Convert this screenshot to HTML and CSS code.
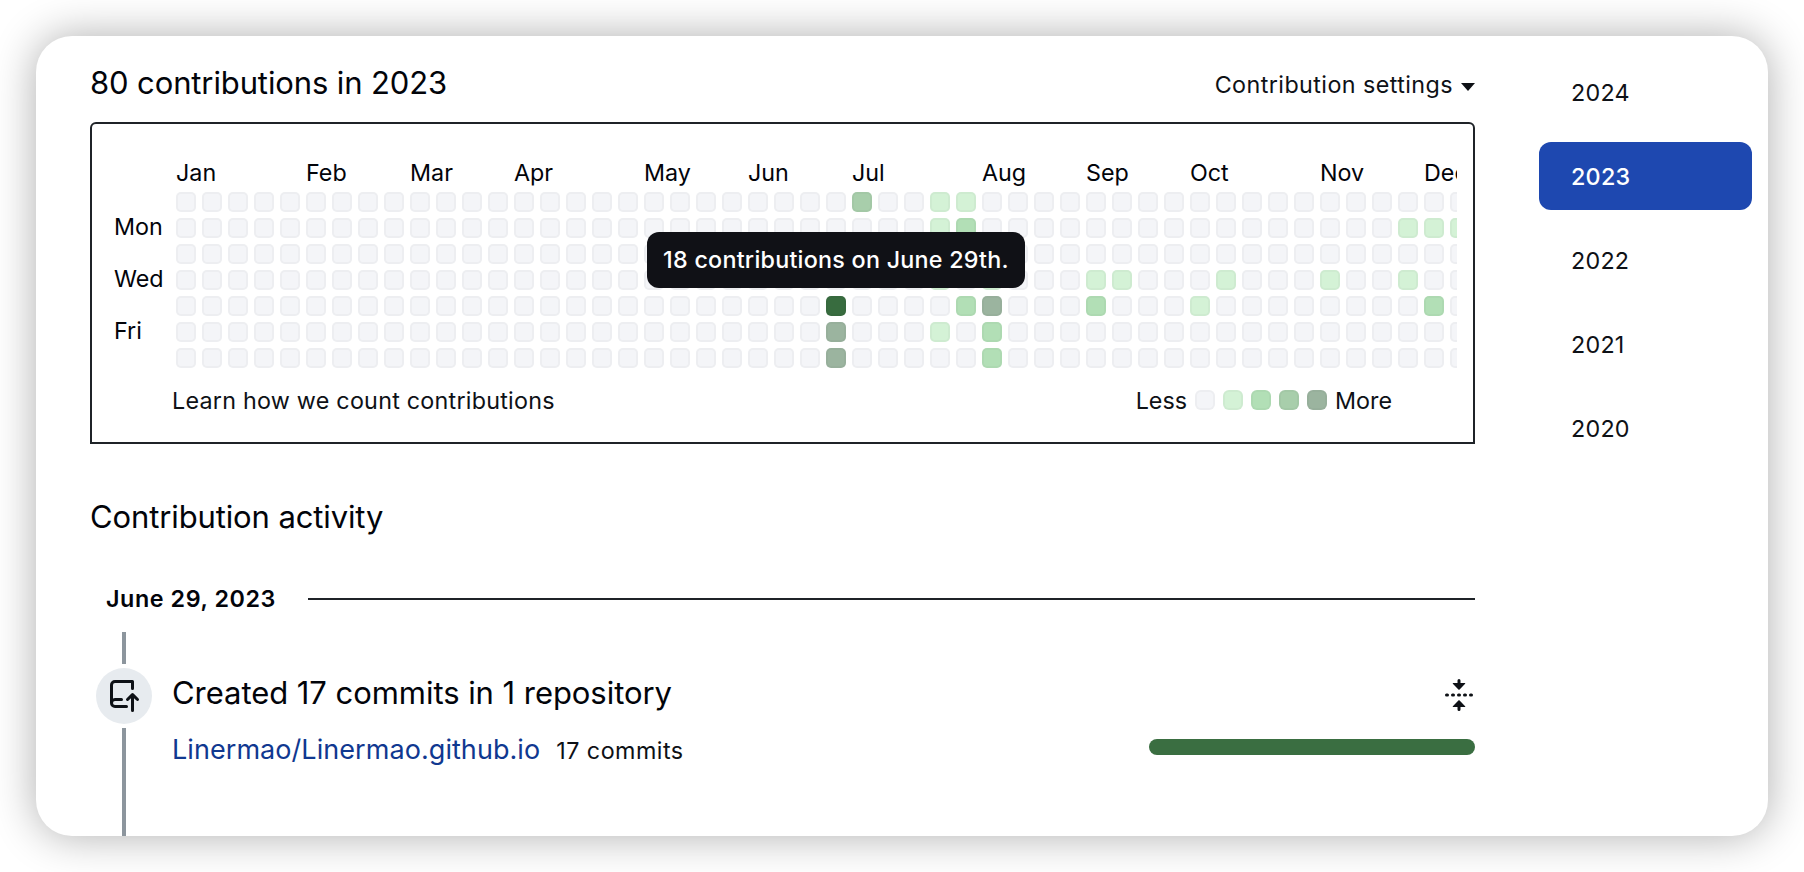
FILE: index.html
```html
<!DOCTYPE html>
<html lang="en">
<head>
<meta charset="utf-8">
<title>Contributions</title>
<link rel="stylesheet" href="styles.css">
</head>
<body>
<div class="card">
  <main class="main">
    <header class="top">
      <h2 class="heading title">80 contributions in 2023</h2>
      <div class="settings"><span>Contribution settings</span><i class="caret"></i></div>
    </header>
    <section class="graph">
      <div class="calendar">
        <div class="days"><span>Mon</span><span>Wed</span><span>Fri</span></div>
        <div class="weeks">
          <div class="months" id="months"></div>
          <div class="cells" id="cells"></div>
        </div>
      </div>
      <div class="footer">
        <span class="learn">Learn how we count contributions</span>
        <div class="legend">
          <span>Less</span>
          <i class="cell l0"></i><i class="cell l1"></i><i class="cell l2"></i><i class="cell l3"></i><i class="cell l4"></i>
          <span>More</span>
        </div>
      </div>
      <div class="tooltip">18 contributions on June 29th.</div>
    </section>
    <h2 class="heading activity">Contribution activity</h2>
    <div class="date"><span>June 29, 2023</span><hr></div>
    <section class="timeline">
      <div class="rail">
        <i class="line upper"></i>
        <div class="badge"><svg width="32" height="32" viewBox="0 0 16 16"><path d="M1 2.5A2.5 2.5 0 0 1 3.5 0h8.75a.75.75 0 0 1 .75.75v3.5a.75.75 0 0 1-1.5 0V1.5h-8a1 1 0 0 0-1 1v6.708A2.493 2.493 0 0 1 3.5 9h3.25a.75.75 0 0 1 0 1.5H3.5a1 1 0 0 0 0 2h5.75a.75.75 0 0 1 0 1.5H3.5A2.5 2.5 0 0 1 1 11.5Zm13.23 7.79h-.001l-1.224-1.224v6.184a.75.75 0 0 1-1.5 0V9.066L10.28 10.29a.75.75 0 0 1-1.06-1.061l2.505-2.504a.75.75 0 0 1 1.06 0L15.29 9.23a.751.751 0 0 1-.018 1.042.751.751 0 0 1-1.042.018Z"/></svg></div>
        <i class="line lower"></i>
      </div>
      <div class="event">
        <div class="summary">
          <h3 class="created">Created 17 commits in 1 repository</h3>
          <svg class="fold" width="32" height="32" viewBox="0 0 16 16"><path d="M10.896 2H8.75V.75a.75.75 0 0 0-1.5 0V2H5.104a.25.25 0 0 0-.177.427l2.896 2.896a.25.25 0 0 0 .354 0l2.896-2.896A.25.25 0 0 0 10.896 2ZM8.75 15.25a.75.75 0 0 1-1.5 0V14H5.104a.25.25 0 0 1-.177-.427l2.896-2.896a.25.25 0 0 1 .354 0l2.896 2.896a.25.25 0 0 1-.177.427H8.75v1.25Zm-6.5-6.5a.75.75 0 0 0 0-1.5h-.5a.75.75 0 0 0 0 1.5h.5ZM6 8a.75.75 0 0 1-.75.75h-.5a.75.75 0 0 1 0-1.5h.5A.75.75 0 0 1 6 8Zm2.25.75a.75.75 0 0 0 0-1.5h-.5a.75.75 0 0 0 0 1.5h.5ZM12 8a.75.75 0 0 1-.75.75h-.5a.75.75 0 0 1 0-1.5h.5A.75.75 0 0 1 12 8Zm2.25.75a.75.75 0 0 0 0-1.5h-.5a.75.75 0 0 0 0 1.5h.5Z"/></svg>
        </div>
        <div class="repo">
          <a class="link">Linermao/Linermao.github.io</a>
          <span class="count">17 commits</span>
          <i class="bar"></i>
        </div>
      </div>
    </section>
  </main>
  <nav class="years">
    <a>2024</a><a class="selected">2023</a><a>2022</a><a>2021</a><a>2020</a>
  </nav>
</div>
<script src="calendar.js"></script>
</body>
</html>
```
FILE: styles.css
```css
* { box-sizing: border-box; }
body {
  margin: 0;
  height: 872px;
  padding: 36px;
  overflow: hidden;
  background: #fff;
  color: #02040a;
  font: 400 23.3px/36px Inter, "Liberation Sans", sans-serif;
}
i { display: block; font-style: normal; }
svg { display: block; fill: #0e1116; }
.card {
  width: 1732px;
  height: 800px;
  padding: 22px 16px 0 54px;
  display: flex;
  justify-content: space-between;
  overflow: hidden;
  border-radius: 36px;
  background: #fff;
  box-shadow: 0 0 44px rgba(0, 0, 0, .32);
}
.main { width: 1385px; }
.top {
  height: 64px;
  display: flex;
  justify-content: space-between;
}
.heading, .created { margin: 0; font-size: 31px; font-weight: 400; line-height: 48px; }
.heading { letter-spacing: -.12px; }
.title { padding-top: 1px; }
.settings { display: flex; align-items: center; height: 53px; gap: 8px; color: #0e1116; letter-spacing: .43px; }
.caret {
  margin-top: 5px;
  border: 7.5px solid transparent;
  border-top: 8px solid #0e1116;
  border-bottom: 0;
}
.graph {
  position: relative;
  height: 322px;
  padding: 30px 16px 0 22px;
  border: 2px solid #1f2328;
  border-radius: 6px 6px 0 0;
}
.calendar { display: flex; justify-content: space-between; }
.days { padding-top: 55px; display: flex; flex-direction: column; gap: 16px; }
.weeks { width: 1281px; overflow: hidden; }
.months, .cells { display: grid; grid-template-columns: repeat(50, 20px); column-gap: 6px; }
.months { height: 38px; line-height: 38px; }
.months span { white-space: nowrap; width: 20px; }
.cells { grid-template-rows: repeat(7, 20px); row-gap: 6px; grid-auto-flow: column; }
.cell {
  width: 20px;
  height: 20px;
  border-radius: 5px;
  border: 2px solid rgba(31, 35, 40, .03);
  background: #f4f5f8;
}
.l1 { background: #d4f2d6; }
.l2 { background: #b2dfb6; }
.l3 { background: #a8ceab; }
.l4 { background: #9bb49f; }
.l5 { background: #386c3f; }
.footer { display: flex; justify-content: space-between; padding: 13px 65px 0 58px; color: #0e1116; }
.footer span { padding-top: 2px; }
.learn { letter-spacing: .24px; }
.legend { display: flex; align-items: center; gap: 8px; }
.legend .cell { border-radius: 6px; }
.tooltip {
  position: absolute;
  left: 555px;
  top: 108px;
  width: 378px;
  height: 56px;
  border-radius: 12px;
  background: #101116;
  color: #fff;
  line-height: 56px;
  text-align: center;
  font-weight: 500;
  letter-spacing: .25px;
  white-space: nowrap;
}
.activity { margin-top: 49px; }
.date { margin-top: 37px; padding-left: 16px; height: 42px; display: flex; align-items: center; justify-content: space-between; font-weight: 600; letter-spacing: .58px; }
hr { width: 1167px; height: 2px; margin: 0; border: 0; background: #1f2328; }
.timeline { display: flex; margin-top: 12px; height: 204px; }
.rail { width: 82px; padding-left: 6px; }
.line { width: 4px; margin-left: 26px; background: #8c959d; }
.upper { height: 32px; }
.badge { width: 56px; height: 56px; margin: 4px 0; padding: 12px; border-radius: 50%; background: #e7ebef; }
.lower { height: 108px; }
.event { flex: 1; padding-top: 37px; }
.summary { display: flex; justify-content: space-between; align-items: center; height: 50px; }
.created { margin-bottom: 2px; letter-spacing: -.05px; }
.fold { margin-top: 2px; }
.repo { display: flex; align-items: baseline; margin-top: 13px; }
.link { font-size: 27px; letter-spacing: .06px; color: #103890; }
.count { margin-left: 16px; color: #0e1116; letter-spacing: .48px; }
.bar { width: 326px; height: 16px; margin: 0 0 8px auto; border-radius: 8px; background: #3a6e41; align-self: center; }
.years { width: 213px; display: flex; flex-direction: column; gap: 16px; }
.years a { height: 68px; padding-left: 32px; border-radius: 12px; line-height: 70px; color: #0e1116; letter-spacing: .25px; }
.years .selected { background: #1e48b0; color: #fff; font-weight: 500; }
```
FILE: calendar.js
```js
const months = { Jan: 0, Feb: 5, Mar: 9, Apr: 13, May: 18, Jun: 22, Jul: 26, Aug: 31, Sep: 35, Oct: 39, Nov: 44, Dec: 48 };
for (const name in months) {
  const label = document.createElement('span');
  label.textContent = name;
  label.style.gridColumn = months[name] + 1;
  document.getElementById('months').append(label);
}
// Activity levels by week, one digit per weekday from Sunday.
const levels = {
  25: '0000544', 26: '3000000', 29: '1101010', 30: '1200200', 31: '0001422',
  35: '0001200', 36: '0001000', 39: '0000100', 40: '0001000', 44: '0001000',
  47: '0101000', 48: '0100200', 49: '0100000'
};
for (let week = 0; week < 50; week++) {
  for (const level of levels[week] || '0000000') {
    const cell = document.createElement('i');
    cell.className = 'cell l' + level;
    document.getElementById('cells').append(cell);
  }
}
```
